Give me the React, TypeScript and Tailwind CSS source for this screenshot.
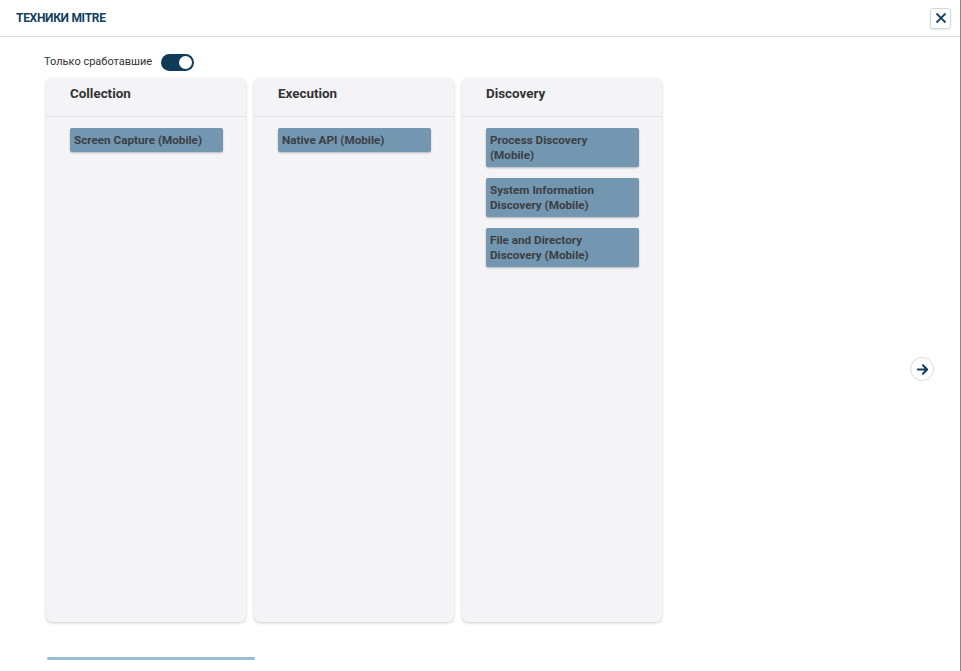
const columns = [
  { title: "Collection", items: ["Screen Capture (Mobile)"] },
  { title: "Execution", items: ["Native API (Mobile)"] },
  {
    title: "Discovery",
    items: [
      "Process Discovery (Mobile)",
      "System Information Discovery (Mobile)",
      "File and Directory Discovery (Mobile)",
    ],
  },
];

function TacticColumn({ title, items }: { title: string; items: string[] }) {
  return (
    <div className="w-[200px] h-[544px] shrink-0 rounded-md bg-[#f4f4f6] shadow-[0_1px_3px_rgba(0,0,0,0.2)] flex flex-col">
      <div className="h-[39px] shrink-0 border-b border-[#e3e3e7] pl-6 pt-[6px] text-[13.4px] font-bold text-[#333]">
        {title}
      </div>
      <div className="flex flex-col gap-[11px] px-6 pt-[11px]">
        {items.map((it) => (
          <div
            key={it}
            className="w-[153px] rounded-[2px] bg-[#7396b1] shadow-[0_1px_2px_rgba(0,0,0,0.25)] pl-[4px] pr-[10px] py-[4.5px] text-[11.7px] leading-[15px] font-bold text-[#3b3f44]"
          >
            {it}
          </div>
        ))}
      </div>
    </div>
  );
}

export default function App() {
  return (
    <div
      className="w-[961px] h-[671px] bg-white flex flex-col border-r border-[#8a8a8a] overflow-hidden"
      style={{ fontFamily: "Roboto, 'Liberation Sans', sans-serif" }}
    >
      <div className="h-[37px] shrink-0 border-b border-[#dadada] flex items-center justify-between pl-4 pr-[9px]">
        <span className="text-[12px] font-bold text-[#123f5e] tracking-tight">ТЕХНИКИ MITRE</span>
        <button className="w-[21px] h-[21px] rounded-[3px] border border-[#d4d8dc] shadow-[0_1px_2px_rgba(0,80,160,0.12)] flex items-center justify-center text-[#164463]">
          <svg width="12" height="12" viewBox="0 0 12 12" fill="none" stroke="currentColor" strokeWidth="1.8">
            <path d="M1.5 1.5l9 9M10.5 1.5l-9 9" />
          </svg>
        </button>
      </div>

      <div className="flex flex-col pl-[44px] pt-[17px] flex-1">
        <div className="flex items-center gap-[9px] h-[16px]">
          <span className="text-[11px] text-[#333]">Только сработавшие</span>
          <div className="w-[33px] h-[17px] rounded-full bg-[#0f3b58] flex items-center justify-end pr-[2px]">
            <div className="w-[13px] h-[13px] rounded-full bg-white" />
          </div>
        </div>

        <div className="flex mt-[8px]">
          <div className="flex-1 flex flex-col pl-[2px]">
            <div className="flex gap-2">
              {columns.map((c) => (
                <TacticColumn key={c.title} title={c.title} items={c.items} />
              ))}
            </div>
            <div className="mt-[35px] ml-[1px] w-[208px] h-[3px] rounded-full bg-[#98bcd4]" />
          </div>
          <div className="self-center pr-[26px]">
            <button className="w-[24px] h-[24px] rounded-full border border-[#d9dcdf] flex items-center justify-center text-[#123f5e]">
              <svg width="13" height="13" viewBox="0 0 14 14" fill="none" stroke="currentColor" strokeWidth="2.2" strokeLinecap="round" strokeLinejoin="round">
                <path d="M2 7h10M7.5 2.5L12 7l-4.5 4.5" />
              </svg>
            </button>
          </div>
        </div>
      </div>
    </div>
  );
}
